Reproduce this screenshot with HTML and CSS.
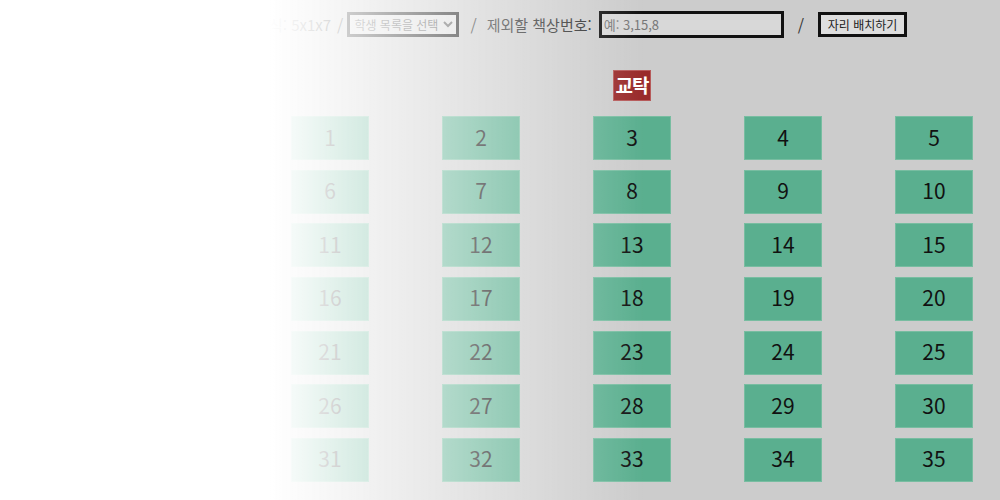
FILE: index.html
```html
<!DOCTYPE html>
<html lang="ko">
<head>
<meta charset="utf-8">
<title>자리 배치</title>
<link rel="stylesheet" href="styles.css">
</head>
<body>
<div class="toolbar">
  <span class="label">현재 배치 방식: 5x1x7</span>
  <span class="sep">/</span>
  <select class="picker">
    <option>학생 목록을 선택</option>
  </select>
  <span class="sep sep-wide">/</span>
  <span class="label">제외할 책상번호:</span>
  <input class="exclude" type="text" placeholder="예: 3,15,8">
  <span class="sep sep-last">/</span>
  <button class="arrange">자리 배치하기</button>
</div>

<div class="stage">
  <div class="desk-row"><span class="desk">교탁</span></div>
  <div class="seats">
    <div class="seat">1</div><div class="seat">2</div><div class="seat">3</div><div class="seat">4</div><div class="seat">5</div>
    <div class="seat">6</div><div class="seat">7</div><div class="seat">8</div><div class="seat">9</div><div class="seat">10</div>
    <div class="seat">11</div><div class="seat">12</div><div class="seat">13</div><div class="seat">14</div><div class="seat">15</div>
    <div class="seat">16</div><div class="seat">17</div><div class="seat">18</div><div class="seat">19</div><div class="seat">20</div>
    <div class="seat">21</div><div class="seat">22</div><div class="seat">23</div><div class="seat">24</div><div class="seat">25</div>
    <div class="seat">26</div><div class="seat">27</div><div class="seat">28</div><div class="seat">29</div><div class="seat">30</div>
    <div class="seat">31</div><div class="seat">32</div><div class="seat">33</div><div class="seat">34</div><div class="seat">35</div>
  </div>
</div>

<div class="fade"></div>
</body>
</html>
```

FILE: styles.css
```css
html, body {
  margin: 0;
  padding: 0;
}

body {
  background: #cccccc;
  font-family: "Noto Sans CJK KR", "Noto Sans", sans-serif;
  color: #222;
  width: 1000px;
  height: 500px;
  overflow: hidden;
}

.toolbar {
  display: flex;
  justify-content: flex-end;
  align-items: center;
  padding: 11px 93px 0 0;
  height: 27px;
  white-space: nowrap;
}

.label {
  font-size: 15px;
  color: #2a2a2a;
}

.sep {
  font-size: 16px;
  color: #333;
  margin: 0 4px 0 6px;
}

.sep-wide {
  margin: 0 10px 0 11px;
}

.sep-last {
  margin: 0 14px 0 14px;
}

.picker {
  box-sizing: border-box;
  width: 112px;
  height: 25px;
  border: 3px solid #111;
  background: #dcdcdc;
  font-family: "Noto Sans CJK KR", sans-serif;
  font-size: 12px;
  color: #555;
  padding: 0;
  border-radius: 0;
  margin: 0;
}

.exclude {
  box-sizing: border-box;
  width: 185px;
  height: 27px;
  margin: 0 0 0 7px;
  border: 3px solid #111;
  background: #d8d8d8;
  font-family: "Noto Sans CJK KR", sans-serif;
  font-size: 13px;
  padding: 0 2px;
  outline: none;
}

.exclude::placeholder {
  color: #777;
  font-family: "Noto Sans CJK KR", sans-serif;
}

.arrange {
  box-sizing: border-box;
  width: 89px;
  height: 25px;
  border: 3px solid #111;
  background: #dedede;
  font-family: "Noto Sans CJK KR", sans-serif;
  font-size: 12px;
  color: #222;
  padding: 0;
  margin: 0;
}

.stage {
  margin: 32px 0 0 291px;
  width: 682px;
}

.desk-row {
  display: flex;
  justify-content: center;
  margin-left: 0;
}

.desk {
  display: block;
  width: 38px;
  height: 31px;
  box-sizing: border-box;
  background: #992a2a;
  border: 1px solid #b65a5a;
  color: #fff;
  font-weight: bold;
  font-size: 19px;
  line-height: 28px;
  text-align: center;
  overflow: visible;
  letter-spacing: -1px;
}

.seats {
  margin-top: 15px;
  display: grid;
  grid-template-columns: repeat(5, 78px);
  grid-auto-rows: 44px;
  column-gap: 73px;
  row-gap: 9.67px;
}

.seat {
  box-sizing: border-box;
  background: #5aaf8f;
  border: 1px solid #78bda1;
  color: #111;
  font-size: 21px;
  padding-bottom: 3px;
  display: flex;
  align-items: center;
  justify-content: center;
}

.fade {
  position: fixed;
  inset: 0;
  pointer-events: none;
  background: linear-gradient(to right, #ffffff 270px, rgba(255, 255, 255, 0) 645px);
}
```
